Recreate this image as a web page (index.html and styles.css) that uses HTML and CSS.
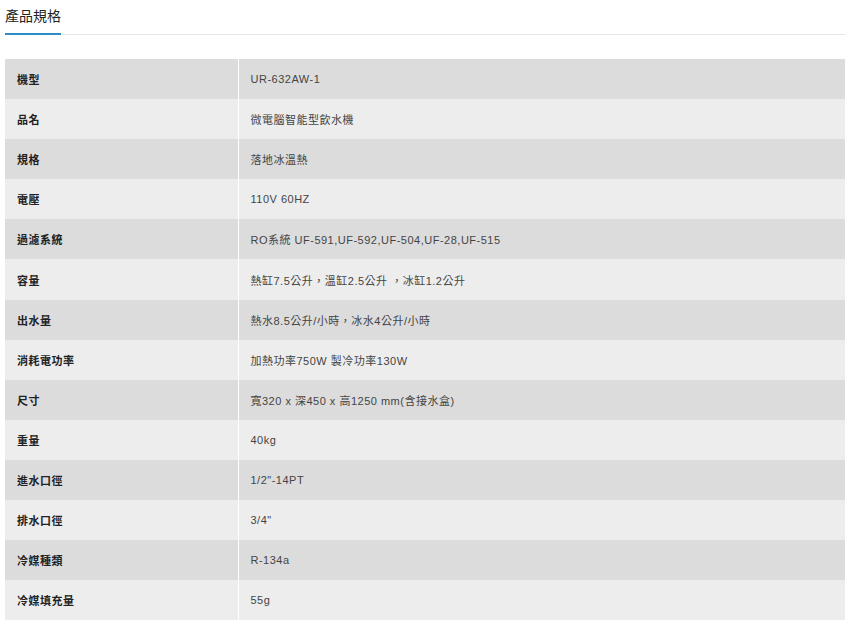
FILE: index.html
```html
<!DOCTYPE html>
<html lang="zh-Hant">
<head>
<meta charset="utf-8">
<title>產品規格</title>
<link rel="stylesheet" href="styles.css">
</head>
<body>
<div class="wrap">
  <div class="tabs">
    <div class="tab">產品規格</div>
  </div>
  <table class="spec">
    <tbody>
      <tr><th>機型</th><td>UR-632AW-1</td></tr>
      <tr><th>品名</th><td>微電腦智能型飲水機</td></tr>
      <tr><th>規格</th><td>落地冰溫熱</td></tr>
      <tr><th>電壓</th><td>110V 60HZ</td></tr>
      <tr><th>過濾系統</th><td>RO系統 UF-591,UF-592,UF-504,UF-28,UF-515</td></tr>
      <tr><th>容量</th><td>熱缸7.5公升，溫缸2.5公升 ，冰缸1.2公升</td></tr>
      <tr><th>出水量</th><td>熱水8.5公升/小時，冰水4公升/小時</td></tr>
      <tr><th>消耗電功率</th><td>加熱功率750W 製冷功率130W</td></tr>
      <tr><th>尺寸</th><td>寬320 x 深450 x 高1250 mm(含接水盒)</td></tr>
      <tr><th>重量</th><td>40kg</td></tr>
      <tr><th>進水口徑</th><td>1/2"-14PT</td></tr>
      <tr><th>排水口徑</th><td>3/4"</td></tr>
      <tr><th>冷媒種類</th><td>R-134a</td></tr>
      <tr><th>冷媒填充量</th><td>55g</td></tr>
    </tbody>
  </table>
</div>
</body>
</html>
```
FILE: styles.css
```css
html, body {
  margin: 0;
  padding: 0;
  background: #fff;
}
body {
  font-family: "Liberation Sans", "Noto Sans CJK TC", sans-serif;
  color: #333;
}
.wrap {
  width: 840px;
  padding-left: 5px;
}
.tabs {
  display: flex;
  border-bottom: 1px solid #e6e6e6;
  height: 35px;
  box-sizing: border-box;
}
.tab {
  font-size: 14px;
  line-height: 18px;
  padding-top: 7px;
  width: 56px;
  height: 35px;
  box-sizing: border-box;
  border-bottom: 2px solid #2b8dc3;
  margin-bottom: -1px;
  color: #222;
}
.spec {
  margin-top: 24px;
  width: 840px;
  border-collapse: collapse;
  font-size: 11px;
  letter-spacing: 0.5px;
}
.spec tr {
  height: 40.1px;
}
.spec tr:nth-child(odd) {
  background: #dcdcdc;
}
.spec tr:nth-child(even) {
  background: #ededed;
}
.spec th {
  width: 233px;
  text-align: left;
  font-weight: bold;
  padding: 0 0 0 12px;
  border-right: 1px solid #fff;
  box-sizing: border-box;
  color: #222;
}
.spec td {
  padding: 0 0 0 12px;
  color: #444;
}
```
